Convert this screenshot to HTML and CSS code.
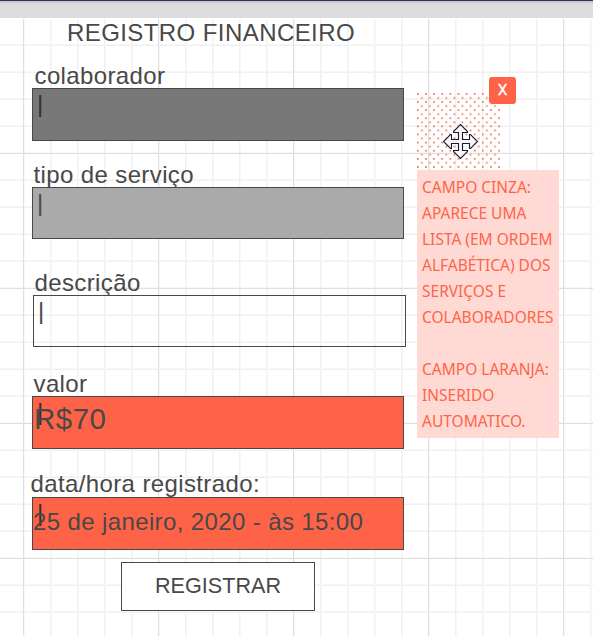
FILE: index.html
```html
<!DOCTYPE html>
<html lang="pt-BR">
<head>
<meta charset="utf-8">
<title>Registro financeiro</title>
<link rel="stylesheet" href="styles.css">
</head>
<body>
<div class="topbar"></div>
<main class="canvas">
  <section class="form">
    <h1 class="title">REGISTRO FINANCEIRO</h1>
    <div class="field field-colab">
      <label class="label">colaborador</label>
      <div class="box dark"><span class="caret">|</span></div>
    </div>
    <div class="field field-tipo">
      <label class="label">tipo de serviço</label>
      <div class="box gray"><span class="caret">|</span></div>
    </div>
    <div class="field field-desc">
      <label class="label">descrição</label>
      <div class="box clear"><span class="caret">|</span></div>
    </div>
    <div class="field field-valor">
      <label class="label">valor</label>
      <div class="box orange"><span class="caret">|</span><span class="value amount">R$70</span></div>
    </div>
    <div class="field field-data">
      <label class="label">data/hora registrado:</label>
      <div class="box orange"><span class="caret">|</span><span class="value date">25 de janeiro, 2020 - às 15:00</span></div>
    </div>
    <button class="submit" type="button">REGISTRAR</button>
  </section>
  <aside class="comment">
    <div class="handle">
      <svg class="dots" width="84" height="77" viewBox="0 0 84 77">
        <defs>
          <pattern id="dots" width="8.12" height="8.12" patternUnits="userSpaceOnUse">
            <rect x="0" y="0" width="1.7" height="1.7" fill="#f4735d"/>
            <rect x="4.06" y="4.06" width="1.7" height="1.7" fill="#f4735d"/>
          </pattern>
        </defs>
        <rect width="84" height="77" fill="url(#dots)"/>
      </svg>
      <button class="close" type="button">X</button>
      <svg class="cursor" width="37" height="37" viewBox="-18.5 -18.5 37 37">
        <path d="M0-17 L7-10 V-9 H2 V-2 H9 V-7 H10 L17 0 L10 7 H9 V2 H2 V9 H7 V10 L0 17 L-7 10 V9 H-2 V2 H-9 V7 H-10 L-17 0 L-10-7 H-9 V-2 H-2 V-9 H-7 V-10Z" fill="#f7f7fa" stroke="#1c1c2c" stroke-width="1.1"/>
      </svg>
    </div>
    <div class="note">CAMPO CINZA:<br>APARECE UMA<br>LISTA (EM ORDEM<br>ALFABÉTICA) DOS<br>SERVIÇOS E<br>COLABORADORES<br><br>CAMPO LARANJA:<br>INSERIDO<br>AUTOMATICO.</div>
  </aside>
</main>
</body>
</html>
```
FILE: styles.css
```css
* { box-sizing: border-box; }
body {
  margin: 0;
  width: 593px;
  height: 636px;
  overflow: hidden;
  font-family: "Liberation Sans", Arial, sans-serif;
  color: #484848;
}
.topbar {
  height: 18px;
  background: linear-gradient(#34344a 0 1px, #c9c4ce 1px 2px, #d8d5da 3px, #dddddd 5px);
}
.canvas {
  display: flex;
  height: 618px;
  border-top: 1px solid #fff;
  background-color: #fff;
  background-image:
    linear-gradient(90deg, #dfdfdf 1px, transparent 1px),
    linear-gradient(#dfdfdf 1px, transparent 1px),
    linear-gradient(90deg, #f1f1f1 1px, #f7f7f7 1px 2px, transparent 2px),
    linear-gradient(#f0f0f0 1px, transparent 1px 26px, #f7f7f7 26px);
  background-size: 135px 135px, 135px 135px, 27px 27px, 27px 27px;
  background-position: 23px -1px, 0 -1px, 23px -1px, 0 -1px;
}
.form {
  display: flex;
  flex-direction: column;
  align-items: flex-start;
  width: 417px;
  padding: 2px 0 0 32px;
}
.title {
  margin: 0 0 0 35px;
  font-size: 24px;
  font-weight: 400;
  line-height: 24px;
  letter-spacing: 0.42px;
  white-space: nowrap;
}
.field { width: 372px; }
.label {
  display: block;
  font-size: 24px;
  line-height: 24px;
  letter-spacing: 0.38px;
  white-space: nowrap;
}
.field-colab { margin-top: 19px; }
.field-colab .label { padding-left: 2.5px; }
.field-tipo { margin-top: 22px; }
.field-tipo .label { padding-left: 1.5px; }
.field-desc { margin: 32px 0 0 1px; width: 373px; }
.field-desc .label { padding-left: 1.5px; }
.field-valor { margin-top: 25px; }
.field-valor .label { padding-left: 1.5px; }
.field-data { margin-top: 23px; }
.field-data .label { margin: 0 0 1px -1.5px; }
.box {
  position: relative;
  display: flex;
  height: 53px;
  border: 1px solid #484848;
}
.dark { background: #787878; }
.gray { background: #aaaaaa; height: 52px; }
.clear { height: 52px; }
.orange { background: #ff6347; }
.caret {
  position: absolute;
  left: 4px;
  top: 3px;
  font-size: 24px;
  line-height: 24px;
}
.dark .caret, .orange .caret { color: #303030; }
.value { position: relative; white-space: nowrap; }
.amount { margin: 7px 0 0 1px; font-size: 29.5px; line-height: 30px; letter-spacing: 0.5px; }
.date { margin-top: 12px; font-size: 24px; line-height: 24px; letter-spacing: 0.38px; }
.submit {
  width: 194px;
  height: 49px;
  margin: 12px 0 0 89px;
  padding: 0 0 2px;
  border: 1px solid #484848;
  background: #fff;
  color: #484848;
  font: 21.6px/45px "Liberation Sans", Arial, sans-serif;
}
.comment {
  width: 142px;
  padding-top: 74px;
}
.handle { position: relative; height: 77px; }
.dots { display: block; }
.close {
  position: absolute;
  left: 72px;
  top: -16px;
  width: 27px;
  height: 27px;
  padding: 0;
  border: 0;
  border-radius: 3px;
  background: #ff6347;
  color: #fff;
  font: 15.5px/27px Roboto, sans-serif;
  -webkit-text-stroke: 0.3px #fff;
}
.cursor { position: absolute; left: 25px; top: 30px; }
.note {
  height: 268px;
  padding: 4px 0 0 5px;
  background: #ffdad5;
  color: #ff6347;
  font: 15.5px/26px "Noto Sans", sans-serif;
  white-space: nowrap;
}
```
